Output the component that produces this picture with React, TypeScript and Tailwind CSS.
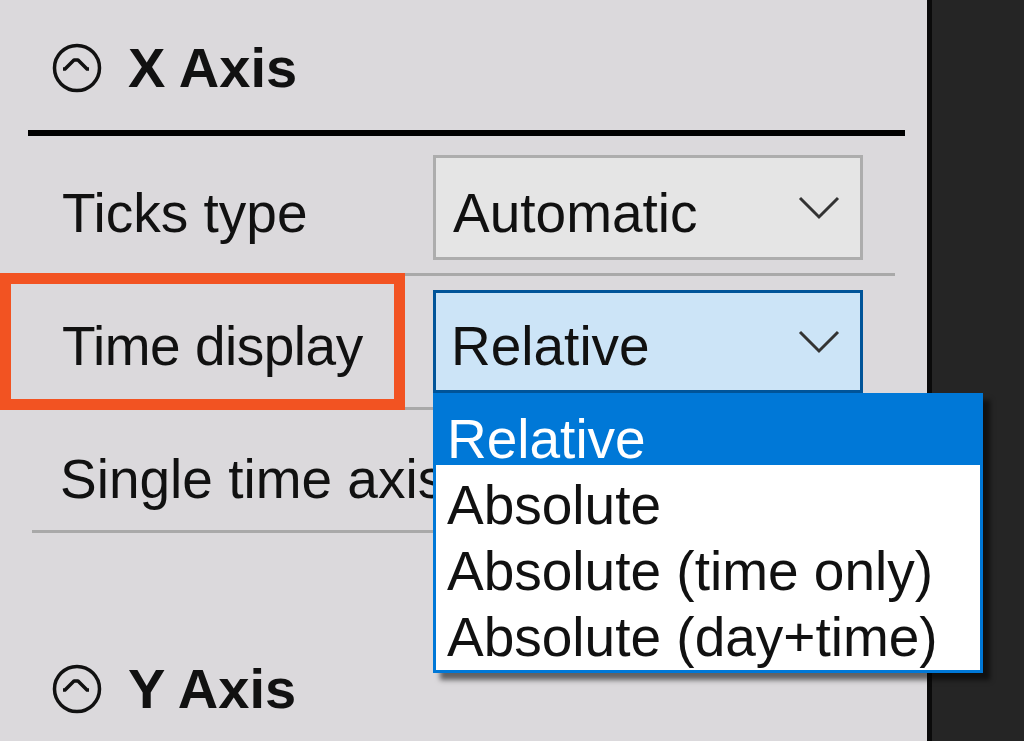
import React from 'react';

const font = 'font-["Liberation_Sans",Arial,sans-serif]';

const CollapseIcon: React.FC = () => (
  <svg width="50" height="50" viewBox="0 0 50 50" className="shrink-0">
    <circle cx="25" cy="25" r="22.5" fill="none" stroke="#111" strokeWidth="3.5" />
    <path d="M11 26 h2 l9 -9 h4 l9 9 h2" fill="none" stroke="#111" strokeWidth="3.5" strokeLinejoin="round" />
  </svg>
);

const Chevron: React.FC = () => (
  <svg width="42" height="24" viewBox="0 0 42 24" className="shrink-0">
    <path d="M2 2 L21 21 L40 2" fill="none" stroke="#333" strokeWidth="3" />
  </svg>
);

const SectionHeader: React.FC<{ title: string; className?: string }> = ({ title, className = '' }) => (
  <div className={`flex h-[130px] items-center gap-[26px] pl-[52px] pt-[6px] ${className}`}>
    <CollapseIcon />
    <span className="text-[56px] font-bold text-[#111]">{title}</span>
  </div>
);

const Separator: React.FC = () => <div className="ml-[32px] h-[3px] w-[863px] bg-[#a9a9a9]" />;

const options = ['Relative', 'Absolute', 'Absolute (time only)', 'Absolute (day+time)'];

export default function App() {
  return (
    <div className={`flex h-[741px] w-[1024px] overflow-hidden ${font}`}>
      {/* properties panel */}
      <div className="w-[927px] shrink-0 bg-[#dbd9dc] text-[55px] text-[#111]">
        <SectionHeader title="X Axis" />
        <div className="ml-[28px] h-[6px] w-[877px] bg-black" />

        {/* Ticks type */}
        <div className="flex items-baseline pb-[13px] pt-[19px]">
          <span className="w-[433px] pl-[62px]">Ticks type</span>
          <div className="flex h-[105px] w-[430px] items-center justify-between border-[3px] border-[#adadad] bg-[#e5e5e5] pl-[17px] pr-[20px]">
            <span className="pt-[12px]">Automatic</span>
            <Chevron />
          </div>
        </div>
        <Separator />

        {/* Time display */}
        <div className="relative flex items-baseline pb-[14px] pt-[14px]">
          <div className="absolute left-0 top-[-3px] h-[137px] w-[405px] border-[11px] border-[#f25322]" />
          <span className="w-[433px] pl-[62px] tracking-[-0.5px]">Time display</span>
          <div className="relative flex h-[103px] w-[430px] items-center justify-between border-[3px] border-[#005499] bg-[#cce4f7] pl-[15px] pr-[20px]">
            <span className="pt-[9px]">Relative</span>
            <Chevron />
            <div className="absolute left-[-3px] top-[100px] z-10 w-[550px] border-[3px] border-[#0078d7] bg-white pb-[7px] shadow-[7px_7px_5px_rgba(0,0,0,0.55)]">
              {options.map((o, i) => (
                <div
                  key={o}
                  className={
                    i === 0
                      ? 'h-[69px] whitespace-nowrap bg-[#0078d7] pl-[11px] leading-[86px] text-white'
                      : 'h-[66px] whitespace-nowrap pl-[11px] leading-[80px] text-[#111]'
                  }
                >
                  {o}
                </div>
              ))}
            </div>
          </div>
        </div>
        <Separator />

        {/* Single time axis (its editor sits under the open list) */}
        <div className="flex items-start pb-[3px] pt-[14px]">
          <span className="mt-[14px] w-[433px] whitespace-nowrap pl-[60px]">Single time axis</span>
          <div className="flex h-[103px] w-[430px] items-center justify-end border-[3px] border-[#adadad] bg-[#e5e5e5] pr-[20px]">
            <Chevron />
          </div>
        </div>
        <Separator />

        <SectionHeader title="Y Axis" className="mt-[88px]" />
      </div>

      {/* dark side */}
      <div className="flex-1 border-l-[5px] border-[#0a0a0a] bg-[#252525]" />
    </div>
  );
}
